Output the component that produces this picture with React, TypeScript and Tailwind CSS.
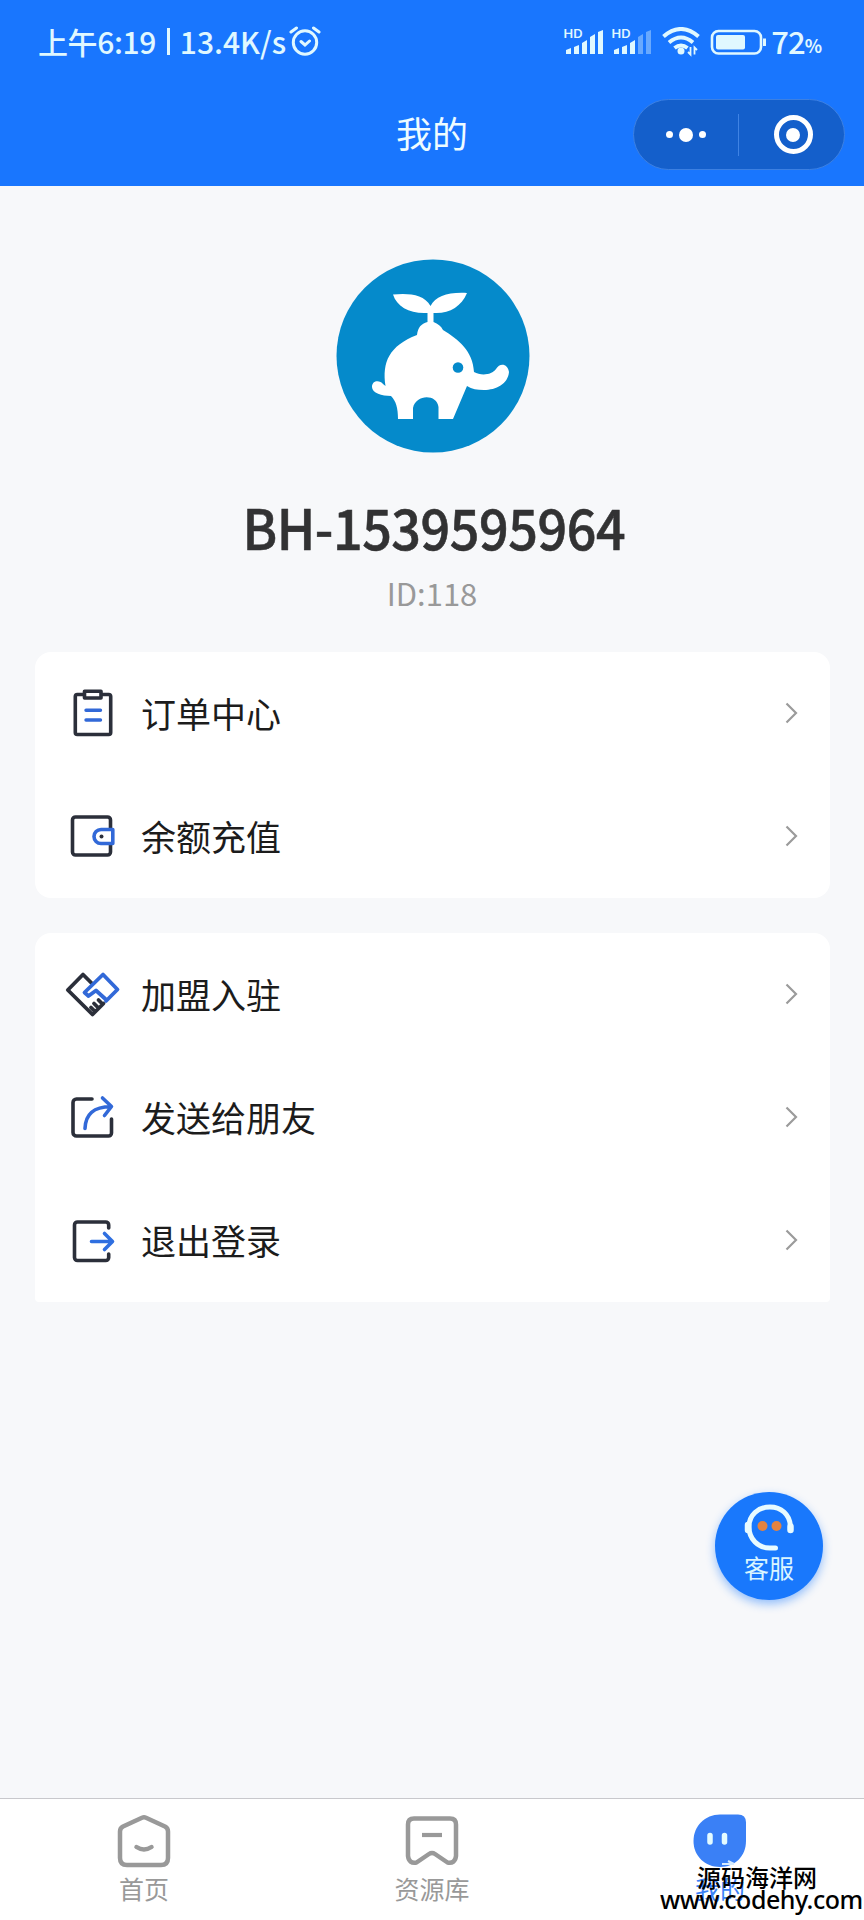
import type { ReactNode } from "react";
import { clsx } from "clsx";

const DARK = "#2b2f3a";
const BLUE = "#3269d8";

function OrderIcon() {
  return (
    <svg width="56" height="56" viewBox="0 0 56 56" fill="none" strokeLinecap="round" strokeLinejoin="round">
      <rect x="10.3" y="8.5" width="35.4" height="40" rx="2" stroke={DARK} strokeWidth="3.6" />
      <rect x="19.5" y="5.2" width="16.5" height="6.8" fill="#fff" stroke={DARK} strokeWidth="3.6" />
      <path d="M21 24.2H35.5M21 34H35.5" stroke={BLUE} strokeWidth="3.4" />
    </svg>
  );
}

function WalletIcon() {
  return (
    <svg width="56" height="56" viewBox="0 0 56 56" fill="none" strokeLinecap="round" strokeLinejoin="round">
      <rect x="7.5" y="8" width="38" height="38" rx="3" stroke={DARK} strokeWidth="3.6" />
      <path d="M47.8 20.5V34.5H36a7 7 0 0 1 0-14Z" fill="#fff" stroke={BLUE} strokeWidth="3.6" />
      <circle cx="36.5" cy="27.5" r="2" fill={DARK} />
    </svg>
  );
}

function JoinIcon() {
  return (
    <svg width="56" height="56" viewBox="0 0 56 56" fill="none" strokeWidth="3.8" strokeLinecap="round" strokeLinejoin="round">
      <path
        d="M26.5 16L18 7.5L2.8 23L27.5 47.5L38.5 36.5M33.5 33L37.5 37M29 36.5L33 40.5M26 40.5L29 43.5"
        stroke={DARK}
      />
      <path d="M41 34L52.5 22.5L38 7.5L19.5 25.500L23.5 29L31 23.5L41.5 33" stroke={BLUE} />
    </svg>
  );
}

function ShareIcon() {
  return (
    <svg width="56" height="56" viewBox="0 0 56 56" fill="none" strokeWidth="3.6" strokeLinecap="round" strokeLinejoin="round">
      <path d="M27 9H11.5a3.5 3.5 0 0 0-3.5 3.5V42.5a3.5 3.5 0 0 0 3.5 3.5H43.5a3 3 0 0 0 3-3V29" stroke={DARK} />
      <path d="M20 38.5C20.5 24.5 28 16.8 46 16.5M37.5 8L46.5 16.5L39.5 25.5" stroke={BLUE} />
    </svg>
  );
}

function LogoutIcon() {
  return (
    <svg width="56" height="56" viewBox="0 0 56 56" fill="none" strokeWidth="3.6" strokeLinecap="round" strokeLinejoin="round">
      <path d="M43.7 15V12a3 3 0 0 0-3-3H12.5a3 3 0 0 0-3 3V44.5a3 3 0 0 0 3 3H40.7a3 3 0 0 0 3-3V41" stroke={DARK} />
      <path d="M26.5 28.5H47M39.5 20.5L47.5 28.5L39.5 36.5" stroke="#2f6fe0" />
    </svg>
  );
}

const groups: { label: string; icon: ReactNode }[][] = [
  [
    { label: "订单中心", icon: <OrderIcon /> },
    { label: "余额充值", icon: <WalletIcon /> },
  ],
  [
    { label: "加盟入驻", icon: <JoinIcon /> },
    { label: "发送给朋友", icon: <ShareIcon /> },
    { label: "退出登录", icon: <LogoutIcon /> },
  ],
];

function Signal({ weak }: { weak?: boolean }) {
  return (
    <svg width="40" height="28" viewBox="0 0 40 28" fill="#e0f8ff">
      <text x="-0.5" y="9.5" fontSize="11.5" fontWeight="600" fontFamily="Inter" textLength="19" lengthAdjust="spacingAndGlyphs">
        HD
      </text>
      <path d="M2 22L7 20V26H2ZM10 19L15 17V26H10ZM18 15L23 12V26H18Z" />
      <path d="M26 9L31 6V26H26ZM34 4L39 2V26H34Z" opacity={weak ? 0.4 : 1} />
    </svg>
  );
}

function StatusBar() {
  return (
    <div className="flex h-[84px] items-center pr-[42px] pl-[38px] text-[#e0f8ff]">
      <span className="mb-[2px] flex text-[30px] leading-none font-medium whitespace-pre">
        <span className="tracking-[-0.4px]">上午6:19</span>
        <span className="mt-[2px] ml-[11px] h-[27px] w-[3px] bg-current" />
        <span className="ml-[10px]">13.4K/s</span>
      </span>
      <svg className="ml-[2px]" width="34" height="32" viewBox="0 0 34 32" fill="none" stroke="currentColor" strokeWidth="3" strokeLinecap="round">
        <circle cx="17" cy="16.5" r="11.7" />
        <path d="M13 15.5L17 19L21.5 15M3 6L8.5 2M31 6L25.5 2" />
      </svg>
      <div className="ml-auto flex items-center">
        <Signal />
        <div className="ml-2">
          <Signal weak />
        </div>
        <svg className="ml-[9px]" width="40" height="30" viewBox="0 0 40 30" fill="none" stroke="currentColor" strokeWidth="4">
          <path d="M2.5 9.5Q20 -5.5 37.5 9.5M8 15.5Q20 5.5 32 15.5M13.5 21Q20 16 26.5 21" />
          <circle cx="20" cy="24" r="3.5" fill="currentColor" stroke="none" />
          <path d="M29.5 20V27.5L27 25M33.5 27.5V20.5L36 23" strokeWidth="1.8" />
        </svg>
        <svg className="ml-[9px]" width="56" height="28" viewBox="0 0 56 28" fill="none">
          <rect x="2" y="3" width="49" height="22.5" rx="6.5" stroke="currentColor" strokeWidth="2.6" />
          <rect x="6" y="7" width="29" height="14.5" rx="2" fill="currentColor" />
          <path d="M54.5 10.5V18" stroke="currentColor" strokeWidth="3" />
        </svg>
        <span className="mb-[3px] ml-[5px] text-[31px] leading-none font-medium tracking-[-1px]">72</span>
        <span className="mt-[5px] text-[18px] leading-none font-bold">%</span>
      </div>
    </div>
  );
}

function Capsule() {
  return (
    <div className="absolute top-[99px] right-[19px] flex h-[71px] w-[212px] items-center rounded-full border border-[#3c80e2] bg-[#145fcb]">
      <div className="flex w-[104px] items-center justify-center gap-[6px]">
        <i className="size-[7px] rounded-full bg-white" />
        <i className="size-[14px] rounded-full bg-white" />
        <i className="size-[7px] rounded-full bg-white" />
      </div>
      <div className="h-[42px] w-px bg-[#3f83e4]" />
      <div className="flex flex-1 justify-center pl-[3px]">
        <div className="flex size-[39px] items-center justify-center rounded-full border-5 border-white">
          <i className="size-[14px] rounded-full bg-white" />
        </div>
      </div>
    </div>
  );
}

function Avatar() {
  return (
    <svg className="ml-[2px]" width="194" height="194" viewBox="0 0 194 194">
      <circle cx="97" cy="97" r="96.5" fill="#058acb" />
      <path
        d="M57 35.5C72 34 88 35 94.5 47C100 37 112 33 131 34C125 48 113 55 97.5 54V63C102 65 105 67 107 71C122 80 137 92 138 113C145 117 156 116 160 110C164 103 172 105 173 113C172 125 160 131 148 131C141 131 136 130 131 127L117 160H102.5V148C101 135 80 135 77 149V160H62C62 149 60 142 55 137C46 137 36 134 36 128C36 121 44 121 47 125L49.5 127C46 103 53 87 81 76C82 68 85 65 91.5 63V54C74 55 61 48 57 35.5Z"
        fill="#fff"
      />
      <circle cx="122" cy="108.5" r="5.3" fill="#058acb" />
    </svg>
  );
}

function Chevron() {
  return (
    <svg className="mb-[2px]" width="14" height="24" viewBox="0 0 14 24" fill="none" stroke="#9b9b9b" strokeWidth="2.2">
      <path d="M2.5 2.5L12 12L2.5 21.5" />
    </svg>
  );
}

function ServiceButton() {
  return (
    <button className="absolute top-[1492px] left-[715px] flex size-[108px] flex-col items-center rounded-full bg-[#1978fc] pt-[10px] shadow-[0_4px_10px_rgba(25,120,252,0.45)]">
      <svg width="54" height="50" viewBox="0 0 54 50" fill="none" stroke="#e8fbff" strokeLinecap="round">
        <path d="M48.5 24C47.5 12 39 5 28 5C16 5 7 13 7 25C7 37 16 46 28 46H33.5" strokeWidth="5" />
        <path d="M6 23V28M48.5 24.5V28" strokeWidth="6.5" />
        <circle cx="20.5" cy="24" r="5" fill="#e48340" stroke="none" />
        <circle cx="34.5" cy="24" r="5" fill="#e48340" stroke="none" />
      </svg>
      <span className="mt-[2px] text-[25px] leading-[26px] text-[#d9f5ff]">客服</span>
    </button>
  );
}

const tabs = [
  {
    label: "首页",
    icon: (
      <svg width="56" height="56" viewBox="0 0 56 56" fill="none" stroke="#999" strokeWidth="4.5" strokeLinecap="round" strokeLinejoin="round">
        <path d="M26 4.7Q28 3.8 30 4.7L49 13.5Q52 15 52 18.5V45Q52 52 45 52H11Q4 52 4 45V18.5Q4 15 7 13.5Z" />
        <path d="M20.5 34Q28 39 35.5 34" />
      </svg>
    ),
  },
  {
    label: "资源库",
    icon: (
      <svg width="56" height="56" viewBox="0 0 56 56" fill="none" stroke="#999" strokeWidth="4.5" strokeLinecap="round" strokeLinejoin="round">
        <path d="M10 5.5H46Q52 5.5 52 11.5V43Q51 51 43.5 49.5L31 41Q28 39 25 41L12.5 49.5Q5 51 4 43V11.5Q4 5.5 10 5.5Z" />
        <path d="M18 22H38" strokeLinecap="butt" strokeWidth="4.2" />
      </svg>
    ),
  },
  {
    label: "我的",
    active: true,
    icon: (
      <svg width="56" height="56" viewBox="0 0 56 56" fill="none">
        <path d="M28 1.5H46Q54 1.5 54 9.5V28C54 43 43 54 28 54C13 54 1.5 43 1.5 28C1.5 13 13 1.5 28 1.5Z" fill="#3a80f6" />
        <path d="M18 22.5V29M32.5 22.5V29" stroke="#e4fbff" strokeWidth="5.5" strokeLinecap="round" />
        <path d="M30 51H42M36 48L42 51" stroke="#d6ecff" strokeWidth="2" />
      </svg>
    ),
  },
];

export default function App() {
  return (
    <div className="relative flex h-[1920px] w-[864px] flex-col overflow-hidden bg-[#f7f8fa] font-['Noto_Sans_CJK_SC',sans-serif]">
      <header className="h-[186px] bg-[#1976fe]">
        <StatusBar />
        <h1 className="mt-[24px] text-center text-[36px] leading-[48px] text-[#eefcff]">我的</h1>
        <Capsule />
      </header>

      <section className="flex h-[466px] flex-col items-center pt-[73px]">
        <Avatar />
        <h2 className="mt-[37px] ml-[4px] scale-x-[0.93] text-[56px] leading-[72px] font-medium tracking-[-0.5px] text-[#323233] [-webkit-text-stroke:0.6px_#323233]">
          BH-1539595964
        </h2>
        <p className="mt-[11px] text-[31px] leading-[40px] text-[#999]">ID:118</p>
      </section>

      {/* Menu */}
      <main className="flex flex-1 flex-col gap-[35px] pr-[34px] pl-[35px]">
        {groups.map((items, i) => (
          <ul key={i} className={clsx("bg-white", i === 0 ? "rounded-2xl" : "rounded-t-2xl rounded-b-sm")}>
            {items.map((item) => (
              <li key={item.label} className="flex h-[123px] items-center pr-[32px] pl-[30px]">
                {item.icon}
                <span className="ml-5 flex-1 text-[35px] text-[#1c1c1c]">{item.label}</span>
                <Chevron />
              </li>
            ))}
          </ul>
        ))}
      </main>

      <ServiceButton />

      {/* Tab bar */}
      <nav className="grid h-[122px] grid-cols-3 border-t border-[#c8c8cc] bg-white">
        {tabs.map((tab) => (
          <div key={tab.label} className="flex flex-col items-center pt-[14px]">
            {tab.icon}
            <span className={clsx("mt-[4px] text-[25px] leading-[30px]", tab.active ? "text-[#3a80f6]" : "text-[#999]")}>
              {tab.label}
            </span>
          </div>
        ))}
      </nav>

      <div className="absolute top-[1865px] left-[660px] text-black">
        <p className="pl-[37px] text-[24px] leading-[24px] font-medium">源码海洋网</p>
        <p className="font-['Noto_Sans'] text-[25px] leading-[20px] font-medium tracking-[-0.5px]">www.codehy.com</p>
      </div>
    </div>
  );
}
